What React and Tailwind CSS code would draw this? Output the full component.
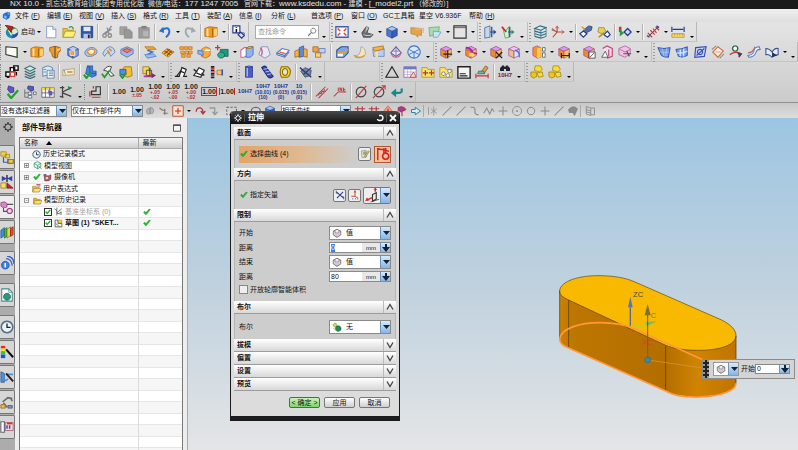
import { useState } from "react";

const cube = (top, left, right, line = "#555") => [
  ["M2 4.5L8 7V15L2 12z", left, line],
  ["M14 4.5L8 7V15L14 12z", right, line],
  ["M8 1.5L14 4.5L8 7L2 4.5z", top, line],
];
const orangeCube = cube("#d69be8", "#f28c1e", "#fbc84a", "#a04a9a");

// Each icon is a list of [path, fill, stroke, strokeWidth] on a 16x16 grid
const ICONS = {
  app: [["M2 6l5-3l6 2v7l-5 3l-6-3z", "#2a6fd6", "#174a9c"], ["M4 8l4 1v5l-4-2z", "#7fc0ff"], ["M9 2l5 1v5l-5-1z", "#38b0e8", "#174a9c"]],
  logo: [
    ["M8 2a7 6.500 0 1 0 .1 0z", "#2f9a4a"],
    ["M8 9L15 7A7 7 0 0 1 7 15z", "#2050b0"],
    ["M1 7a7 7 0 0 0 7 8l1-4z", "#1d86c8"],
    ["M7 6l5-2l3 4l-5 3z", "#e8e8d0"],
    ["M4 6l3 5l6-6", null, "#d8e4d0", 1.5],
    ["M0 0l9 2l-2 6z", "#c81e1e", "#701010"],
  ],
  file: [["M3 1.500H10L13.500 5V14.500H3z", "#fff", "#6a83c0"], ["M10 1.500V5H13.500", "#cfe0fa", "#6a83c0"]],
  open: [["M1 4h5l1 2h6v8H1z", "#e8c33c", "#a88a18"], ["M1 14l3-7h12l-3 7z", "#fdf07a", "#a88a18"], ["M8 3q4-3 5 2", null, "#3a9a3a", 1.5]],
  save: [["M1.500 1.500H14.500V14.500H1.500z", "#2f56a8", "#16306c"], ["M4 2h8v5H4z", "#dfeafa"], ["M4 10h8v5H4z", "#b9c6da"], ["M9 11h2v4H9z", "#223"]],
  cut: [["M12 1L6 10M7 3L9 10M4 9L12 5", null, "#8c8c8c", 1.5], ["M4 10a2 2 0 1 0 .1 0zM10 10a2 2 0 1 0 .1 0z", null, "#8c8c8c", 1.5]],
  copy: [["M1 2h8v9H1z", "#a3a3a3", "#8c8c8c"], ["M6 5h6l3 3v7H6z", "#979797", "#858585"]],
  paste: [["M2 3h12v12H2z", "#9c9c9c", "#8a8a8a"], ["M5 1h6v3H5z", "#828282"], ["M7 7h6v6H7z", "#b5b5b5"]],
  undo: [["M4 6Q12 1 13 7Q13 11 9 14", null, "#2d6fd0", 2.2], ["M1 7L6 2L7 9z", "#2d6fd0"]],
  redo: [["M12 6Q4 1 3 7Q3 11 7 14", null, "#a3abb0", 2.2], ["M15 7L10 2L9 9z", "#a3abb0"]],
  block: [["M1 4l5-2l9 1v9l-5 2l-9-1z", "#f39a1c", "#a55c0a"], ["M4 4v9", null, "#fff0c0", 2], ["M10 4v9", null, "#a55c0a", 1.5], ["M11 5l4-1v8l-4 1z", "#ffd070"]],
  info: [["M1 1h8v8H1z", "#fff", "#223a90", 1.3], ["M5 2.500v1M5 4.500v4", null, "#101040", 1.8], ["M7 11L10 8L14 12L11 15z", "#dfe6ff", "#223a90", 1.3], ["M9 9h5v4", null, "#223a90"]],
  lens: [["M10 2a4 4 0 1 0 .1 0z", null, "#777", 1.5], ["M7 9L2 14", null, "#777", 2]],
  fit: [["M1 2h14v12H1z", "#fff", "#3c5fb0", 1.5], ["M3 4l3 3M13 4l-3 3M3 12l3-3M13 12l-3-3", null, "#e03030", 1.6]],
  shade: [["M2 9l5-7l3 1l-2 6l7 2l-3 3H4z", "#6b7074", "#333"], ["M7 2l3 1l-4 6z", "#bbb"], ["M4 11q5 2 10 0", null, "#ccc", 1.2]],
  solid: cube("#a9c6f5", "#4a77cf", "#3560b6", "#2a4a90"),
  plane: [["M1 3l12 1v8l-4-1v3l-3-3l-5-1z", "#e5a54c", "#b98038"], ["M6 5l9-1v5", null, "#d8b890", 1.5]],
  section: [["M1 3l12-1l-1 7l-10 4z", "#a8dcae", "#5aa872"], ["M6 7l9 1l-4 6l-5 0z", "#c0e6f8", "#6a90c0"]],
  frame: [["M1 1h14v14H1z", "#e4e4e4", "#333", 1.3], ["M1 3h14", null, "#333"]],
  door: [["M2 3l6-2v13l-6 1z", "#c3d9ef", "#34588a"], ["M10 2v12M8 8h7", null, "#244c9a", 1.4], ["M12 5l3 3l-3 3z", "#244c9a"]],
  door2: [["M2 3l3 4l4-5v12l-4 1z", "#d8f0d8", "#2a9a40"], ["M1 2l5 6", null, "#d02828", 2], ["M10 2v12M8 8h7", null, "#244c9a", 1.4], ["M12 5l3 3l-3 3z", "#2a9a40"]],
  layers: [["M2 4l6-3l7 2l-6 3zM2 7l7 2l6-2M2 10l7 2l6-2M2 13l7 2l6-2", "#d6eaf4", "#336a80", 1.2], ["M2 4v9M15 3v10M9 6v9", null, "#336a80"]],
  csys: [["M2 14L7 8V2M7 8H15M7 8L1 5", null, "#c04830", 1.3], ["M5 4L7 1L9 4M12 6l3 2l-3 2", null, "#c04830"], ["M1 3l3 2l-3 2z", "#888"]],
  move: [["M1 10L5 7L9 10L5 14z", "#fff", "#223a90", 1.4], ["M5 6L11 1l4 1l-1 4l-6 3z", "#4c70b8", "#334"], ["M3 2l4 3", null, "#e09020", 1.6]],
  key: [["M2 3h6l2 4l-4 3l-5-2z", "#e7d057", "#948020"], ["M8 11L12 7L15 11L12 14z", "#fff", "#223a90", 1.4], ["M2 14l6-5", null, "#a89020", 1.8]],
  pick: [["M1 2h3v6H1z", "#e02c2c"], ["M2 5l5 4l-5 4z", "#2c9a40"], ["M7 8L11 4L15 8L11 12z", "#cfd8ff", "#223a90", 1.5]],
  measure: [["M2 14L14 2", null, "#444", 1.2], ["M2 9l5 5M5 6l5 5M8 4l4 5M11 2l4 4", null, "#c83434", 1.3], ["M1 12l3 2M12 1l3 2", null, "#3050a0", 1.4]],
  ruler: [["M1 10h14v4H1z", "#f6dc70", "#a48430"], ["M1 2v6M15 2v6M2 5h12", null, "#223a90", 1.3], ["M4 10v2M7 10v2M10 10v2M13 10v2", null, "#a48430"]],

  sketch: [["M1 2l13 1v11l-13-3z", "#f7fbf4", "#333", 1.2], ["M14 3v11", null, "#3b7a3b", 1.5]],
  revolve: [["M2 3q6-3 12 0v4q-3 1-3 7q-3 2-6-1q0-5-3-6z", "#f49d22", "#8a4a0a"], ["M8 1v14", null, "#555", 1.4], ["M10 6q3 0 4-2", null, "#ffe0a0", 1.6]],
  hollow: [...cube("#b4cdf7", "#5583da", "#7ca3ea", "#2a4a90"), ["M4 7l6-1v6l-5 0z", "#f0a040", "#fff"]],
  hole: [["M1 8q3-6 10-5q6 3 3 7q-4 4-10 3q-4-2-3-5z", "#a9c4f0", "#4a6cb0"], ["M4 7q4-4 8-1q1 4-4 5q-4-1-4-4z", "#fff3c8", "#e89020", 1.5]],
  rib: [["M1 10q3-8 9-8q4 1 5 6l-5 5q-1-5-4-4q-2 1-3 4z", "#c3dbf5", "#4a6cb0"], ["M6 6l3 4M8 4l3 3", null, "#e89020", 2]],
  pocket: [["M1 5l7-3l7 3v5l-7 4l-7-4z", "#9db9ee", "#4060a8"], ["M3 6l5 3l5-3l-5-2z", "#f07b50", "#b03030"]],
  thicken: [["M2 2h10l3 3H5z", "#f8a62c", "#b36a10"], ["M5 6l6 2l-6 3", null, "#456fc8", 1.6], ["M2 11l10-1l3 3l-10 2z", "#9fbcf2", "#456fc8"]],
  pattern: [["M1 9l6-5l8 4l-7 6z", "#f9b64a", "#a86010"], ["M4 7l7 4M7 5l6 4M4 10l6-5M7 12l5-5", null, "#8a4a10", 1.3]],
  grid: [["M1 2h4v3H1zM6 2h4v3H6zM11 2h4v3h-4zM2 7h4v3H2zM7 7h4v3H7zM11 7h4v3h-4zM3 11h4v3H3zM9 11h4v3H9z", "#fbb040", "#c06a10"]],
  unite: [["M5 5l5-3l5 2v8l-5 3l-5-2z", "#f8ad3c", "#ad650c"], ["M1 6l6 1v5l-6-2z", "#8fb2f0", "#3f63b0"], ["M9 6h6", null, "#fff", 1.6]],
  unite2: [["M6 5h9v8H6z", "#1d9a80", "#0c5a4c"], ["M7 8a4 3.500 0 1 0 .1 0z", "#2fae8c", "#0c5a4c"], ["M3 0v6M0 3h6", null, "#d03030", 1.4]],
  trim: [["M1 6l4-3h4v8l-4 3H1z", "#fff", "#d06090", 1.2], ["M7 4l3-2h5v9l-3 3H7z", "#8fb4f2", "#305aa8"], ["M7 4l3-2h5l-3 2z", "#f6c04a", "#a06a10"]],
  sheet: [["M4 2h7l3 9l-6 4l-7-4z", "#e7e9fa", "#6d78b8"], ["M3 3q3 4 1 9", null, "#e05050", 1.5]],
  slab: [["M1 9L7 4L15 6L10 12z", "#fff", "#5a74c0", 1.3], ["M1 9v2l9 3v-2M10 14l5-6", null, "#5a74c0", 1.2], ["M4 8l7 2", null, "#e07050", 1.5]],
  bend: [["M1 7l5-2v8l-5 1z", "#f9b33c", "#9d5c12"], ["M6 3l5-2v12l-5 1z", "#5a8ad8", "#2c4f98"], ["M11 4l4 1v9l-4-1z", "#f9b33c", "#9d5c12"]],
  bend2: [["M1 2h6v6H1z", "#f9a23c", "#a05c12"], ["M8 4h7v5H8z", "#bcd0f5", "#4f70b8"], ["M4 9h6v5H4z", "#fbd27a", "#a05c12"]],
  edge: [["M2 6l5-4h8v7l-5 5H2z", "#7ba4ee", "#2c4f98", 1.2], ["M3 9h7l5-4", null, "#e8a020", 1.8], ["M3 10h6v3H3z", "#fff"]],
  swoosh: [["M1 12q8 2 8-10q6 1 5 9q-3 6-13 1z", "#f9e3b0", "#8a9ad0"], ["M2 13q6 3 11-1", null, "#e09030", 1.5]],
  shell: [["M2 5l9-3l4 2v9H3z", "#b7cdf2", "#5c78b0"], ["M2 3l12-2v4l-10 2z", "#f7b24a", "#a06a10"], ["M5 8v6h3V7z", "#f6dfa0"]],
  draft: [["M8 2l6 7l-6 4L2 9z", "#ece2f4", "#5c5ca0", 1.2], ["M3 10a5 4 0 0 0 10 0", null, "#c86080", 1.4], ["M8 2v11M5 7h6", null, "#5c5ca0"]],
  wire: [["M8 1a7 7 0 1 0 .1 0z", "#d8e8fb", "#4878c8", 1.3], ["M2 5l6 3l6-3M8 8v7M2 11l6-3l6 3", null, "#4878c8", 1.1]],
  synMove: [...orangeCube, ["M10 6v9M5 10.500h10", null, "#222", 1.4]],
  synDel: [...orangeCube, ["M2 3q6 0 8 6l5 1", null, "#b02090", 2], ["M6 9h5v4H6z", "#f8e04a"]],
  synX: [...orangeCube, ["M8 8l7 7M15 8l-7 7", null, "#222", 1.6]],
  synRep: [...cube("#eac8f2", "#f4c07a", "#d8e4fa", "#a04a9a"), ["M9 6q6 1 5 8", null, "#6070c0", 1.6]],
  synOff: [["M1 3l5-2l4 2v11l-4 1l-5-3z", "#f59422", "#a04a9a"], ["M6 4l4-1v11l-4 1z", "#fbd050"], ["M12 3h3v4h-3zM12 9h3v5h-3z", "#fff", "#444"]],
  synDim: [...orangeCube, ["M5 9v6M14 9v6M5 12h9", null, "#222", 1.4]],
  synBox: [...orangeCube, ["M8 8h7v7H8z", "#fff", "#222"], ["M9 14l5-5", null, "#222"]],
  synPink: [["M3 4l5-3l6 3v9l-6 2", "#f8dcec", "#c04a7a", 1.4], ["M2 14l4-7l3 7z", "#fff", "#333"], ["M10 5v8", null, "#c04a7a", 1.4]],
  synPink2: [["M1 4l7-3l6 3v6l-6 4l-7-3z", "#f2c4e4", "#a04a9a"], ["M2 5l6 3l6-3", null, "#a04a9a"], ["M6 10h9M10 7l3 6", null, "#555", 1.4]],
  surf: [["M1 3q7 2 14 0l-2 11q-5 0-8-2z", "#6f9df0", "#2c52a8", 1.1], ["M6 4l2 9M11 4l-1 9M3 8q6 1 11 0", null, "#b8d0fa"]],
  surf2: [["M1 5q7 0 13-3v10q-6 3-10 1z", "#6f9df0", "#2c52a8", 1.1], ["M6 5v8M10 4v9M2 9q7 1 12-2", null, "#d8e6ff", 1.4]],
  surf3: [["M3 3l12-1l-2 11l-11 1z", "#c3d3fa", "#3a50b0", 1.3], ["M8 5a3 3 0 1 0 .1 0zM4 12l9-8", null, "#3a50b0", 1.3]],
  quad: [["M8 2l6 5l-6 7l-6-6z", "#fdf0e4", "#c87850", 1.4], ["M1 5l5-4M15 10l-5 5", null, "#888", 1.2], ["M5 8l6 0", null, "#c87850"]],
  gearSurf: [["M7 1a3 3 0 1 0 .1 0z", "#fff", "#2c6a3c", 1.6], ["M1 11q6-5 13-1l-3 4", null, "#b04848", 1.6], ["M9 8l6 2l-3 4z", "#3a3a66"]],
  curve: [["M1 12q7-1 7-6q1-4 6-4l1 3q-4 0-5 4q-2 5-8 5z", "#eef2fc", "#5c78c0", 1.2], ["M1 9q6 0 8-7", null, "#b07070", 1.3]],
  book: [["M1 4q4 0 7 4q3-5 7-4v7q-4 0-7 3q-3-4-7-3z", "#e6eefc", "#3a5090", 1.2], ["M8 8l6 4l-6 2z", "#23306a"]],

  nodes: [["M1 8h5v5H1zM6 3h5v5H6zM10 1h5v5h-5z", "#fff", "#111", 1.6], ["M6 8h5v5H6z", "#fff", "#d04040", 1.5], ["M2 14h3M13 8v4", null, "#111", 1.6]],
  stack: [["M2 4l6-3l6 3l-6 3z", "#cfeae6", "#3a6e74", 1.2], ["M2 7l6 3l6-3M2 10l6 3l6-3M2 13l6 2.500l6-2.500", null, "#3a6e74", 1.5]],
  sheets: [["M2 3l6-2l5 2v10l-5-2l-6 2z", "#dcecfa", "#3f6898"], ["M7 6h8v9H7z", "#eef4fb", "#3f6898"], ["M9 8h5M9 10h5M9 12h5M3 5h3M3 8h3", null, "#3f6898"]],
  note: [["M1 6l13-2v7l-13 1z", "#f8ecd0", "#b09058"], ["M6 7h6v2H6z", "#c89850"], ["M2 5l2 6", null, "#777"]],
  partA: [["M5 1h6v6h4v5l-5 2l-7-4z", "#3c84dc", "#1a4a98"], ["M5 1l3 2v6l7 1", null, "#1a4a98"], ["M1 11l3 4l5-7", null, "#239a2f", 2.2]],
  partB: [["M3 6q4-6 9-4l-2 5l5 5l-4 1l-4-6z", "#f0f4f4", "#444", 1.1], ["M1 10l3 4l6-8", null, "#239a2f", 2]],
  partC: [["M6 2h8l1 10l-5 2l-6-2V5z", "#f8c02c", "#946a08"], ["M1 5h7v6H1z", "#4f8de0", "#1a4a98"], ["M1 11l3 4l4-6", null, "#239a2f", 2]],
  kit: [["M1 2h7v8H1z", "#f6d84c", "#8a7010"], ["M5 6h6v6H5z", "#f6d84c", "#222"], ["M2 13l10 0", null, "#a43c9a", 2], ["M9 3v9", null, "#444", 1.4], ["M11 9l5 3l-5 3z", "#7a2a80"]],
  tag: [["M1 13h5L9 3l5 2l-3 8h4", "#fff", "#222", 1.3], ["M7 7l5 2M3 13L8 6", null, "#222", 1.3]],
  tag2: [["M2 12L8 3l6 3l-4 8z", "#fff", "#222", 1.3], ["M5 9l7 3M2 5l4 3M11 9l3 3", null, "#222", 1.5]],
  wave: [["M3 1v2M3 5v2M3 9v2M3 13v2", null, "#222", 4], ["M1 4h4M1 8h5M1 12h4", null, "#d03030", 1.4], ["M8 6h6v5H8z", "#f6c46a", "#a06a20"], ["M14 5v7", null, "#3a58b0", 1.8]],
  tube: [["M4 2h8v12H4z", "#4a5cc0", "#24307c"], ["M6 3v10", null, "#aab6f4", 1.6], ["M4 2q4-2 8 0q-4 2-8 0z", "#8c9cec", "#24307c"]],
  spring: [["M2 3q4-4 6 1l7 9q-4 4-7-1z", "#3c50b4", "#1c2a78", 1.3], ["M4 5l5-1M6 8l5-1M8 11l5-1", null, "#b8c2f8", 1.1]],
  ring: [["M4 2h7q4 3 3 7q-1 5-4 5H4q-3-6 0-12z", "#f8d430", "#8a6c08", 1.2], ["M8 4a3 4 0 1 0 .1 0z", "#e8e4d0", "#8a6c08", 1.2]],
  bolt: [["M2 7l5-4l7 3l-1 6l-6 2z", "#7484a8", "#2f3d68"], ["M1 3l13 11M14 3L5 11", null, "#2f3d68", 1.5]],
  tri: [["M8 2L15 14H1z", "none", "#222", 1.3]],
  cal: [["M1 2h14v12H1z", "#fff", "#7a50a0"], ["M1 2h14v3H1z", "#6c7ad0"], ["M1 8h14M1 11h14M5 5v9M9 5v9", null, "#b0a0d0"], ["M8 14l4-6l3 6z", "#f8d8d8", "#c03030"]],
  foldPlus: [["M1 3h6l1 2h7v9H1z", "#f8e468", "#a08a18"], ["M5 6v6M2 9h6M12 6v6M9 9h6", null, "#c03030", 1.4]],
  foldGear: [["M1 3h6l1 2h7v9H1z", "#f8e468", "#a08a18"], ["M5 8a2 2 0 1 0 .1 0zM12 5a2 2 0 1 0 .1 0zM10 10a2 2 0 1 0 .1 0z", "#fff", "#555"]],
  box: [["M1 2h14v13H1z", "#f4f4f4", "#222", 1.6], ["M3 10h7M3 12.500h9", null, "#222", 1.4]],
  brush: [["M7 8L12 1l3 2l-4 6z", "#d8a050", "#705020"], ["M4 7h6l1 3H3z", "#7ab0a0", "#356050"], ["M1 10v5M15 10v5M1 12.500h14", null, "#d03030", 1.3]],
  gold: [["M6 1h6l2 4l-3 3l-6-2z", "#f8dc3c", "#9a7c08"], ["M1 8h6l1 5l-4 2l-3-2z", "#f0c420", "#9a7c08"], ["M8 9l6-1l1 5l-5 1z", "#f8dc3c", "#9a7c08"]],

  plug: [["M4 1l6 2v5l-4 1l-3-4z", "#5c58c0", "#2a2880"], ["M3 10l4 5l8-9", null, "#22a52e", 2.6]],
  plugTree: [["M6 1l6 1v4l-3 1l-4-3z", "#5c58c0", "#2a2880"], ["M2 5v9h4M2 9h4", null, "#555"], ["M6 8h4v3H6zM6 12h4v3H6zM12 8h3v3h-3z", "#e8eefa", "#556"]],
  plugGrid: [["M1 3h14v11H1z", "#fff", "#444"], ["M1 3h14v3H1z", "#f0d850"], ["M1 9h14M5 3v11M10 3v11", null, "#444"], ["M8 6l5 1v5l-4 0z", "#5c58c0"]],
  axes: [["M4 1v13M4 8l10-5M4 9l10 4M1 3h5", null, "#444", 1.4], ["M10 1l5 2l-4 3z", "#2c8a50"], ["M1 13l4 1", null, "#444", 1.5]],
  profile: [["M3 11V7h5V2h5v9z", "none", "#333", 1.3], ["M3 14h10M1 7v6M5 4V1", null, "#c83434", 1.4]],
  stripes: [["M1 13L12 2M4 15L15 4", null, "#b84040", 1.2], ["M4 12l1-3l2 1l1-3l2 1l1-3", null, "#b84040", 1.2]],
  leader: [["M1 13L6 8H15", null, "#b84040", 1.2], ["M6 3v4M8 7V3l2 4V3M12 3v4h2M12 5h2", null, "#b84040", 1.1]],
  dia: [["M8 2.500a5.500 5.500 0 1 0 .1 0z", null, "#444", 1.3], ["M2 15L14 1", null, "#b84040", 1.3]],
  dia2: [["M8 2.500a5.500 5.500 0 1 0 .1 0z", null, "#444", 1.3], ["M1 15L15 1M11 1h4v4", null, "#b84040", 1.3]],
  back: [["M13 4q2 5-3 5H5", null, "#158a8a", 2.6], ["M7 4L1 9L7 14z", "#158a8a"]],

  rot: [["M3 9q0-5 5-5v8q-5 1-5-3zM8 3q5 0 5 5t-5 3z", "#b4b4b4", "#888"]],
  snapA: [["M2 4l4 3h4M9 5v8M7 11h6", null, "#8c7068", 1.5]],
  snapB: [["M1 1h14v14H1z", "#fbe2cc", "#b05838", 1.3], ["M8 4v8M4 8h8", null, "#c03030", 1.5]],
  hook: [["M3 9q0-6 6-5q3 1 3 6M9 8l3 4l3-4", null, "#a83848", 1.7]],
  elbow: [["M2 4h7v8M6 9l3 4l4-4", null, "#999", 1.8]],
  lasso: [["M1 3h13v10H1z", null, "#444", 1, "3 2"]],
  magnet: [["M3 12q-4-8 5-9q8 1 5 9", null, "#666", 1.5], ["M6 9h4v3H6z", "#aaa"]],
  hash: [["M5 2v12M11 2v12M1 5h14M1 11h4M11 11h4", null, "#b04040", 1.6]],
  person: [["M8 1l5 6v6H3V7z", "#f0a080", "#c05030"], ["M8 5v8", null, "#c03030", 1.6]],
  flag: [["M3 4q6-4 10 2l-6 3l-4-2zM8 7v8", "#8048b0", "#c03050", 1.5]],
  diamond: [["M7 3l7 5l-7 5v-3H2V6h5z", "#d0f0f4", "#2a8098", 1.3]],
  dotted: [["M2 3v10M5 5l8 6M5 11l8-6M9 2v12", null, "#9a9a9a", 1.3]],
  line: [["M2 14L14 2", null, "#8a8a8a", 1.4]],
  arcS: [["M2 3h3q3 0 3 4v3q0 3 5 3", null, "#8a8a8a", 1.5]],
  zig: [["M1 11l4-7l4 8l3-7l3 4", null, "#8a8a8a", 1.4]],
  plus: [["M8 2v12M2 8h12", null, "#8a8a8a", 1.4]],
  target: [["M8 2a6 6 0 1 0 .1 0z", null, "#8a8a8a", 1.2], ["M8 7a1 1 0 1 0 .1 0z", "#777"]],
  ringG: [["M8 3a5 5 0 1 0 .1 0z", null, "#8a8a8a", 1.3]],
  blob: [["M2 6q6-7 12-1l-4 9l-2-4l-5 0z", "#8a8a8a", "#777"]],
  page: [["M3 2l6 2v10l-6-2zM9 4h5v9H9M3 6l6 2M3 9l6 2", "none", "#8a8a8a", 1.2]],

  gear: [["M8 3a5 5 0 1 0 .1 0z", null, "#222", 1.6], ["M8 0v3M8 13v3M0 8h3M13 8h3M3 3l2 2M11 11l2 2M13 3l-2 2M5 11l-2 2", null, "#222", 1.6]],
  gearW: [["M8 3.500a4.500 4.500 0 1 0 .1 0z", null, "#fff", 2], ["M8 0v3M8 13v3M0 8h3M13 8h3M3 3l2 2M11 11l2 2M13 3l-2 2M5 11l-2 2", null, "#fff", 1.8]],
  asm: [["M1 2h6v5H1zM6 5h5v4H6z", "#f6d040", "#9a7c10"], ["M4 8v6h5M9 11h6v4H9z", "none", "#3c5aa8", 1.4], ["M10 11h5v4h-5z", "#f6d040", "#9a7c10"]],
  constraint: [["M2 1l6 3l6-3v6l-6-3l-6 3z", "#2c40c0"], ["M8 0v8", null, "#111", 1.4], ["M1 9h6v6H1z", "#f8e050", "#8a7010"], ["M8 9l7 6H8z", "#d02030", "#801020"]],
  tree: [["M1 3l4-1l3 2v4l-4 1l-3-2z", "#d888c0", "#8a3a80"], ["M8 5h7M4 9v4h4", null, "#555", 1.2], ["M11 9.500a3 3 0 1 0 .1 0z", "#f4d0e8", "#a03a80", 1.4]],
  books: [["M1 6l4-3v9l-4 3z", "#3c90e0", "#1a5090"], ["M5 5l3-2v10l-3 2z", "#40b850", "#1d7030"], ["M8 5l4-3v10l-4 3z", "#f0d040", "#907010"], ["M12 4l3-2v9l-3 2z", "#e05030", "#902010"]],
  radio: [["M6 6a4.500 4.500 0 1 0 .1 0z", "#3f7fe0", "#1c4aa0"], ["M6 8v5", null, "#fff", 1.8], ["M7 3q6 0 7 8M8 0q8 1 8 9", null, "#2d62c8", 1.5]],
  web: [["M2 1h8l4 4v10H2z", "#fff", "#4a8a8a", 1.2], ["M8 6a4 4 0 1 0 .1 0z", "#2c9a6a", "#1a5a80"], ["M10 1v4h4", null, "#4a8a8a"]],
  clock: [["M8 1.500a6.500 6.500 0 1 0 .1 0z", "#eaf2fa", "#56708c", 1.8], ["M8 4v4.500h4", null, "#222", 1.5]],
  spectrum: [["M1 1h5v3H1z", "#e03020"], ["M1 4h5v3H1z", "#f8e020"], ["M1 7h5v4H1z", "#30c840"], ["M1 11h5v4H1z", "#2050e0"], ["M7 5l8 9", null, "#111", 2.4]],
  wand: [["M1 2l4 2v10H1z", "#5090d8", "#2a5090"], ["M4 7q2 8 5 3M9 5h6", null, "#5090d8", 1.8], ["M7 4l8 9", null, "#222", 2.2]],
  robot: [["M3 8l6-5l5 1M4 9l4 5M12 3l2 4", null, "#666", 1.8], ["M1 11h5v4H1z", "#f0b848", "#806020"], ["M9 12h5v3H9z", "#8a96b8", "#445"]],
  doc: [["M1 2h4v12H1z", "#fff", "#667", 1.3], ["M6 3h9v9H6z", "#f4d8d8", "#a04050"], ["M8 6v4M11 6v4", null, "#2c4cb0", 1.6], ["M8 4h6", null, "#d03030", 2]],

  view: [["M2 4l6-3l6 3v6l-6 4l-6-4z", "#dff4ea", "#2f9a70", 1.4], ["M2 4l6 4l6-4M8 8v6", null, "#2f9a70", 1.3], ["M10 9l5 5", null, "#d04040", 1.6]],
  camera: [["M2 5h8l4-2v8l-4 3H3z", "#b85868", "#6a2030"], ["M7 6a3 3 0 1 0 .1 0z", "#dcd0e0", "#553"], ["M1 2h5v3H1z", "#704a90"]],
  exprs: [["M1 4h5l1 2h6v8H1z", "#e8b83c", "#8a6a18"], ["M1 14l3-6h12l-3 6z", "#fbe27a", "#8a6a18"], ["M8 1h7M8 3.500h7", null, "#a03030", 1.4]],
  folder: [["M1 4h5l1 2h6v8H1z", "#e2b030", "#8a6a18"], ["M1 14l3-6h12l-3 6z", "#fbdf62", "#8a6a18"]],
  datum: [["M5 1v14M5 10l9-7M5 11l9 2M1 3l4 4", null, "#555", 1.4], ["M9 9l5-1l-1 4z", "#3c9a58"]],
  sketchT: [["M2 14V2h5v6h7v6z", "none", "#333", 1.2], ["M8 2h6v5H8z", "#f6d850", "#8a7010"], ["M3 8l7 6", null, "#2c8a40", 1.5]],
  tick: [["M1 9l5 5l9-11l-3-1l-6 7l-3-3z", "#27b534", "#128a20", 0.6]],
  win: [["M1 1.500h14v13H1z", "#f4f4f4", "#333", 1.6], ["M1 3h14", null, "#333", 1.6]],
  sketchBtn: [["M2 3l8-1v11l-7 1z", "#d6ddd0", "#777"], ["M5 4h5v5H5z", "#8cae80"], ["M7 12l6-9l2 1l-6 9z", "#e8c860", "#706020"]],
  curveBtn: [["M2 1v14M1 2q8 1 14 3M9 1v6", null, "#c82828", 1.6], ["M11 7a3.500 3.500 0 1 0 .1 0zM11 1v6", null, "#c82828", 1.9]],
  reverse: [["M2 3l12 10M13 3L3 13", null, "#2c3f94", 1.7], ["M2 1v4h3M14 15v-4h-3", null, "#2c3f94", 1.2]],
  vecDlg: [["M8 1v9H2M8 10l5 3", null, "#c85030", 1.5], ["M6 4l2-4l2 4z", "#c85030"], ["M4 14h1M8 14h1M12 14h1", null, "#223a90", 2]],
  vector: [["M8 14V7l4-2v7z", "#eee", "#333", 1.2], ["M8 10L2 13M11 4V0", null, "#d03030", 1.6], ["M0 14l2-4l3 3z", "#d03030"], ["M9 2l2-2l2 2z", "#d03030"], ["M6 15l9-3", null, "#333"]],
  value: [["M2 5l6-3l6 3v6l-6 4l-6-4z", "#f0ecec", "#5a5058", 1.2], ["M2 5l6 3l6-3M8 8v7M5 4v8M11 4v8", null, "#7a6a74"]],
  none: [["M5 2a3 3 0 1 0 .1 0z", "#c8e060", "#5a7a18"], ["M10 6a4.500 4.500 0 1 0 .1 0z", "#1f8a58", "#0c5030"], ["M2 10l5 4", null, "#e0b030", 1.6]],
};

function Icon({ name, className = "size-3.5" }) {
  return (
    <svg className={`${className} shrink-0`} viewBox="0 0 16 16" aria-hidden="true">
      {ICONS[name].map(([d, fill, stroke, width, dash], i) => (
        <path key={i} d={d} fill={fill || "none"} stroke={stroke || "none"} strokeWidth={width || 0.8} strokeDasharray={dash} />
      ))}
    </svg>
  );
}

// Toolbar tokens: "g" and ":" grips, "|" and "||" separators, "v" drop-down, "." overflow
const ROW_1A = "g logo START v file open save | cut copy paste | undo v redo | block v | info".split(" ");
const ROW_1B = ". : fit v shade v solid v plane section v frame v : door door2 . : layers csys v | move key | pick v | measure v ruler .".split(" ");
const ROW_2 = "g sketch v block revolve hollow hole rib pocket || thicken pattern grid unite unite2 v trim sheet slab bend bend2 || edge swoosh shell draft wire . : synMove v synDel v synX synRep v synOff v synDim v synBox synPink synPink2 v . : surf surf2 surf3 quad gearSurf curve book v .".split(" ");
const ROW_3A = "g nodes stack sheets | note | partA partB partC || kit . : tag tag2 wave . : tube spring ring | bolt .".split(" ");
const ROW_3B = ": tri cal foldPlus foldGear box brush || H7 . : gold gold .".split(" ");
const ROW_4 = "g plug plugTree plugGrid axes . g profile || T0 T1 T2 T3 T4 T5 T6 T7 T8 T9 T10 || stripes leader | dia dia2 back .".split(" ");

const TOLERANCES = {
  T0: { text: "1.00" },
  T1: { text: "1.00", sub: ["±.05"] },
  T2: { text: "1.00", sub: ["+.05", "-.02"] },
  T3: { text: "1.00", sub: ["+.05", "-.00"] },
  T4: { text: "1.00", sub: ["+.00", "-.02"] },
  T5: { text: "1.00", box: "border border-[#b03030]" },
  T6: { text: "1.00", box: "border-x border-[#b03030]" },
  T7: { text: "10H7", blue: true },
  T8: { text: "10H7", sub: ["(10.01)", "(10)"], blue: true },
  T9: { text: "10H7", sub: ["(0.015)", "(0)"], blue: true },
  T10: { text: "10", sub: ["(0.015)", "(0)"], blue: true },
};

function Tolerance({ text, sub = [], box = "", blue }) {
  return (
    <button className={`flex w-[18px] flex-col items-center font-bold ${blue ? "text-[#30308c]" : "text-[#222]"}`}>
      <span className={`leading-[7px] ${blue ? "text-[6px]" : "text-[7px]"} ${box}`}>{text}</span>
      {sub.map((s) => (
        <span key={s} className={`text-[5px] leading-[5px] ${blue ? "text-[#30308c]" : "text-[#b03030]"}`}>{s}</span>
      ))}
    </button>
  );
}

function Caret({ className = "" }) {
  return <i className={`size-0 border-x-2 border-t-2 border-x-transparent border-t-black ${className}`} />;
}

function Tool({ token }) {
  if (token === "g") return <i className="h-4 w-[3px] border-l border-dotted border-[#888]" />;
  if (token === ":") return <i className="ml-px h-5 w-1 border-l border-[#c0c0c0] bg-[radial-gradient(#999_1px,transparent_1px)] bg-size-[4px_3px]" />;
  if (token === "|") return <i className="ml-px h-4 w-0.5 border-l border-[#b4b4b4] bg-[#f4f4f4]" />;
  if (token === "||") return <i className="mr-px ml-0.5 h-4 w-0.5 border-l border-[#b4b4b4] bg-[#f4f4f4]" />;
  if (token === "v") return <button aria-label="下拉" className="flex h-4 w-[7px] items-center justify-center"><Caret /></button>;
  if (token === ".") return <button aria-label="更多" className="flex h-4 w-[9px] items-end justify-center pb-0.5"><Caret /></button>;
  if (token === "START") return <button className="w-3.5 whitespace-nowrap">启动</button>;
  if (token === "H7") {
    return (
      <button className="flex w-[18px] flex-col items-center">
        <svg className="h-2 w-3" viewBox="0 0 12 8" aria-hidden="true"><path d="M1 4l3-3l2 2l2-2l3 3v3H7V5H5v2H1z" fill="#223" /></svg>
        <span className="text-[6px] leading-[7px] font-bold text-[#7a2020]">10H7</span>
      </button>
    );
  }
  if (TOLERANCES[token]) return <Tolerance {...TOLERANCES[token]} />;
  return (
    <button aria-label={token} className="flex w-[18px] justify-center hover:bg-white/60">
      <Icon name={token} />
    </button>
  );
}

function Toolbar({ tokens }) {
  return (
    <div className="flex h-5 shrink-0 items-center border-r border-b border-r-[#b8b8b8] border-b-[#c4c4c4] *:shrink-0">
      {tokens.map((token, i) => <Tool key={i} token={token} />)}
    </div>
  );
}

const MENUS = [
  ["文件", "F", "w-8"], ["编辑", "E", "w-8"], ["视图", "V", "w-8"], ["插入", "S", "w-8"],
  ["格式", "R", "w-8"], ["工具", "T", "w-8"], ["装配", "A", "w-8"], ["信息", "I", "w-8"],
  ["分析", "L", "w-10"], ["首选项", "P", "w-10"], ["窗口", "O", "w-8"], ["GC工具箱", "", "w-9"],
  ["星空 V6.936F", "", "w-[50px]"], ["帮助", "H", "w-8"],
];

function BlueArrow({ full }) {
  return (
    <span className="pointer-events-none flex w-2.5 shrink-0 items-center justify-center self-stretch border-l border-[#6d93bb] bg-linear-to-b from-[#d8ebfc] to-[#86b4e2]">
      <svg className="size-2" viewBox="0 0 8 8" aria-hidden="true"><path d={full ? "M3 0h2v3h3L4 8L0 3h3z" : "M1 2h7L4.500 6z"} fill="#10223c" /></svg>
    </span>
  );
}

function Picker({ label, icon, options, className = "h-3.5 w-[62px]" }) {
  return (
    <span className={`flex shrink-0 items-center border border-[#8a8a8a] bg-white ${className}`}>
      {icon && <Icon name={icon} className="mr-1 ml-0.5 size-2.5" />}
      <select aria-label={label} className="w-0 flex-1 appearance-none bg-transparent outline-none">
        {options.map((option) => <option key={option}>{option}</option>)}
      </select>
      <BlueArrow />
    </span>
  );
}

function SelectionIcons({ names }) {
  return names.map((name, i) =>
    name === "v" ? <Caret key={i} className="mx-0.5 self-center" /> : (
      <button key={i} aria-label={name} className="flex w-3.5 justify-center"><Icon name={name} className="size-3" /></button>
    )
  );
}

function SelectionBar() {
  return (
    <div className="flex h-4 shrink-0 items-center border-t border-[#8f8f8f] bg-linear-to-b from-[#c8c8c8] to-[#dedede] *:shrink-0">
      <Picker label="类型过滤器" options={["没有选择过滤器"]} className="h-3 w-[67px]" />
      <Picker label="选择范围" options={["仅在工作部件内"]} className="ml-1 h-3 w-[72px]" />
      <SelectionIcons names={["rot", "snapA", "snapB", "v", "hook", "elbow"]} />
      <div className="ml-1 flex items-center"><SelectionIcons names={["lasso", "v"]} /></div>
      <div className="ml-0.5 flex"><SelectionIcons names={["magnet", "solid"]} /></div>
      <Picker label="曲线规则" options={["相连曲线"]} className="ml-1 h-3 w-[70px]" />
      <div className="ml-0.5 flex"><SelectionIcons names={["hash", "hash", "person", "flag", "diamond"]} /></div>
      <i className="mr-0.5 h-3 w-px bg-[#aaa]" />
      <SelectionIcons names={["dotted", "line", "line", "arcS", "zig", "plus", "target", "ringG", "plus", "line", "blob"]} />
      <i className="mr-0.5 h-3 w-px bg-[#aaa]" />
      <SelectionIcons names={["page"]} />
    </div>
  );
}

const TABS = [
  ["asm", ""], ["constraint", ""], ["tree", "bg-[#ececec]"], ["books", ""],
  ["radio", "mt-1.5"], ["web", "mt-[7px]"], ["clock", "mt-[7px]"],
  ["spectrum", ""], ["wand", ""], ["robot", ""], ["doc", ""],
];

function ResourceBar() {
  return (
    <nav className="flex w-[15px] shrink-0 flex-col bg-[#acacac]">
      <button aria-label="选项" className="flex h-[27px] items-start justify-center pt-1"><Icon name="gear" className="size-2.5" /></button>
      {TABS.map(([name, extra]) => (
        <button key={name} aria-label={name} className={`mb-px flex h-6 shrink-0 items-center rounded-r-xs border-y border-r border-[#777] bg-[#d6d6d6] ${extra}`}>
          <Icon name={name} />
        </button>
      ))}
    </nav>
  );
}

const NODES = [
  { icon: "clock", text: "历史记录模式", pad: "pl-3" },
  { icon: "view", text: "模型视图", pad: "pl-1", expand: "+" },
  { icon: "camera", text: "摄像机", pad: "pl-1", expand: "+", ticked: true },
  { icon: "exprs", text: "用户表达式", pad: "pl-3" },
  { icon: "folder", text: "模型历史记录", pad: "pl-1", expand: "-" },
  { icon: "datum", text: "基准坐标系 (0)", pad: "pl-6", box: true, style: "text-[#a0a0a0]" },
  { icon: "sketchT", text: "草图 (1) \"SKET...", pad: "pl-6", box: true, style: "font-bold" },
];
const EMPTY_ROWS = 20;

function Check() {
  const [on, setOn] = useState(true);
  return (
    <span className="grid place-items-center *:col-start-1 *:row-start-1">
      <input
        type="checkbox"
        aria-label="显示"
        checked={on}
        onChange={() => setOn(!on)}
        className="size-2 appearance-none border border-[#333] bg-white"
      />
      {on && <Icon name="tick" className="pointer-events-none size-1.5" />}
    </span>
  );
}

const ROW = "h-3 border-b border-[#e6e6e6] even:h-[11px] odd:bg-[#f6f6f6]";

function PartNavigator() {
  return (
    <aside className="flex w-[173px] shrink-0 flex-col border-r border-[#aaa] bg-[#ededed] px-1">
      <header className="flex h-[19px] shrink-0 items-center justify-between px-0.5 pl-[3px]">
        <h2 className="text-[8px] leading-[10px] font-bold">部件导航器</h2>
        <button aria-label="固定"><Icon name="win" className="size-2" /></button>
      </header>
      <div className="min-h-0 flex-1 overflow-hidden border border-b-0 border-[#777] bg-white">
        <table className="w-full table-fixed border-collapse text-left leading-[8px]">
          <thead>
            <tr className="h-2.5 bg-linear-to-b from-[#f4f4f4] to-[#cfcfcf]">
              <th className="w-[118px] border-r border-b border-[#aaa] py-0 pl-1 font-normal">
                <span className="flex items-center gap-2">名称 <i className="size-0 border-x-3 border-b-4 border-x-transparent border-b-black" /></span>
              </th>
              <th className="border-b border-[#aaa] py-0 pl-1 font-normal">最新</th>
            </tr>
          </thead>
          <tbody>
            {NODES.map((node) => (
              <tr key={node.text} className={ROW}>
                <td className={`border-r border-[#dcdcdc] py-0 pr-0 ${node.pad}`}>
                  <span className={`flex items-center gap-0.5 whitespace-nowrap ${node.style || ""}`}>
                    {node.expand && (
                      <button aria-label="展开" className="mr-0.5 flex size-[5px] items-center justify-center border border-[#999] text-[5px] leading-none">{node.expand}</button>
                    )}
                    {node.ticked && <Icon name="tick" className="size-2" />}
                    {node.box && <Check />}
                    <Icon name={node.icon} className="size-[9px]" />
                    {node.text}
                  </span>
                </td>
                <td className="py-0 pl-1">{node.box && <Icon name="tick" className="size-2" />}</td>
              </tr>
            ))}
            {Array.from({ length: EMPTY_ROWS }, (_, i) => (
              <tr key={i} className={ROW}>
                <td className="border-r border-[#dcdcdc] p-0" />
                <td className="p-0" />
              </tr>
            ))}
          </tbody>
        </table>
      </div>
    </aside>
  );
}

function Model() {
  return (
    <svg className="absolute top-[142px] left-[352px] h-[150px] w-[258px]" viewBox="0 0 774 450" role="img" aria-label="拉伸预览">
      <defs>
        <linearGradient id="side" x1="0" x2="1">
          <stop offset="0" stopColor="#c98200" />
          <stop offset=".08" stopColor="#bd7600" />
          <stop offset=".6" stopColor="#b46e00" />
          <stop offset=".78" stopColor="#d08400" />
          <stop offset="1" stopColor="#c07400" />
        </linearGradient>
      </defs>
      <path d="M59 92V238C60 250 70 258 86 264L377 393C400 407 440 412 480 411C550 408 588 390 588 370V228z" fill="url(#side)" />
      <path d="M59 92C62 62 120 46 180 47C225 48 255 53 285 66L545 180C575 195 589 212 588 228C586 255 540 272 470 271C440 271 400 266 377 256L86 120C68 112 58 104 59 92z" fill="#f8b900" stroke="#5a4210" strokeWidth="2" />
      <path d="M59 92V238M86 120V262M377 256V393M588 228V370" fill="none" stroke="#4c3206" strokeWidth="2" />
      <path d="M59 238C62 205 120 188 180 188C230 188 260 196 285 207L490 300M59 238C60 250 70 258 86 264L377 393C400 407 440 412 480 411C550 408 588 390 588 370" fill="none" stroke="#ff983a" strokeWidth="5" />
      <path d="M271 197V130" stroke="#5d6c88" strokeWidth="4" />
      <path d="M264 142L271 110L278 142z" fill="#5d74b4" />
      <path d="M280 202L322 194" stroke="#b9cf40" strokeWidth="4" />
      <path d="M316 186L350 184L322 198z" fill="#7cb860" />
      <path d="M323 300V160" stroke="#70623c" strokeWidth="3" />
      <path d="M314 166L323 132L332 166z" fill="#7d7038" />
      <path d="M323 300L490 324" stroke="#d69a48" strokeWidth="2" />
      <circle cx="323" cy="300" r="9" fill="#2b8bb0" stroke="#1b5c78" />
      <g fontFamily="Liberation Sans, sans-serif" fontSize="23">
        <text x="279" y="111" fill="#4a4a58">ZC</text>
        <text x="332" y="175" fill="#8a7a20">C</text>
        <text x="307" y="255" fill="#d04a20">XC</text>
      </g>
    </svg>
  );
}

function StartHandle() {
  return (
    <div className="absolute top-[241px] left-[514px] flex h-5 w-[93px] items-center border border-[#8c8c8c] bg-[#d4d4d4]">
      <span className="h-full w-1.5 border-x-2 border-dotted border-[#999] bg-[#222]" />
      <span className="ml-1 flex h-3.5 w-[26px] items-center border border-[#999] bg-white">
        <Icon name="value" className="mx-0.5 size-2.5" />
        <button aria-label="限制类型" className="flex flex-1 self-stretch"><BlueArrow /></button>
      </span>
      <label className="ml-0.5 flex items-center whitespace-nowrap">
        开始
        <span className="flex h-2.5 w-[35px] items-center border border-[#888] bg-white">
          <input className="w-0 flex-1 pl-px outline-none" defaultValue="0" />
          <BlueArrow full />
        </span>
      </label>
    </div>
  );
}

function Section({ title, open, className = "", children }) {
  return (
    <section>
      <h3 className="flex h-[13px] items-center justify-between border-b border-[#9c9c9c] bg-linear-to-b from-white to-[#d8d8d8] pl-[3px] font-bold">
        {title}
        <button aria-label={title} className="flex h-full w-[13px] items-center justify-center border-l border-[#bbb]">
          <svg className="size-2" viewBox="0 0 8 8" aria-hidden="true">
            <path d={open ? "M1 6.500L4 1.500L7 6.500" : "M1 1.500L4 6.500L7 1.500"} fill="none" stroke="#444" strokeWidth="1.300" />
          </svg>
        </button>
      </h3>
      {open && <div className={`border-x border-[#b4b4b4] bg-[#cdcdcd] px-1 ${className}`}>{children}</div>}
    </section>
  );
}

function Distance({ id, value, selected }) {
  return (
    <div className="flex h-[11px] items-center justify-between">
      <label htmlFor={id}>距离</label>
      <span className="flex h-[11px] w-[62px] items-center border border-[#8a8a8a] bg-white pl-px">
        <input id={id} defaultValue={value} className={`outline-none ${selected ? "w-1 bg-[#2f86e0] text-white" : "w-4"}`} />
        <span className="ml-auto flex h-full w-[18px] items-center justify-center bg-[#e8e8e8] text-[6px]">mm</span>
        <BlueArrow full />
      </span>
    </div>
  );
}

const SMALL_BUTTON = "flex items-center justify-center border border-[#777] bg-[#eeeeee] rounded-xs";
const DIALOG_BUTTON = "h-[11px] w-[31px] rounded-xs border leading-[8px] whitespace-nowrap";

function ExtrudeDialog() {
  return (
    <div role="dialog" aria-label="拉伸" className="absolute top-[111px] left-[230px] w-[170px] rounded-t-sm border-x border-b-5 border-[#1c1c1c] bg-[#dcdcdc]">
      <header className="flex h-[13px] items-center rounded-t-sm bg-linear-to-b from-[#4a4a4a] to-[#111] pr-px text-white">
        <span className="flex w-3.5 justify-center border-r border-[#555]"><Icon name="gearW" className="size-2" /></span>
        <h2 className="ml-[3px] flex-1 text-[8px] font-bold">拉伸</h2>
        <button aria-label="重置" className="w-3">
          <svg className="mx-auto size-2" viewBox="0 0 8 8" aria-hidden="true"><path d="M3 1.500H5.500Q7 2 7 4Q6.500 7 3 6.500Q1.500 6 1.500 5" fill="none" stroke="white" strokeWidth="1.500" /></svg>
        </button>
        <button aria-label="关闭" className="w-3 border-l border-[#555]">
          <svg className="mx-auto size-2" viewBox="0 0 8 8" aria-hidden="true"><path d="M1 1L7 7M7 1L1 7" stroke="white" strokeWidth="1.800" /></svg>
        </button>
      </header>
      <div className="px-[3px] pt-[3px] pb-2">
        <Section title="截面" open className="flex h-7 items-center">
          <span className="flex h-[17px] flex-1 items-center gap-0.5 bg-linear-to-r from-[#e2a468] via-[#dfb88f] to-[#cdcdcd] pl-px">
            <Icon name="tick" className="size-2" />选择曲线 (4)
          </span>
          <button aria-label="绘制截面" className={`${SMALL_BUTTON} h-3.5 w-[13px]`}><Icon name="sketchBtn" className="size-2.5" /></button>
          <button aria-label="曲线" className="ml-[3px] flex h-[17px] w-[17px] items-center justify-center border border-[#b05a30] bg-[#f8c09c]"><Icon name="curveBtn" /></button>
        </Section>
        <Section title="方向" open className="flex h-7 items-center gap-0.5">
          <span className="flex flex-1 items-center gap-0.5 pl-px"><Icon name="tick" className="size-2" />指定矢量</span>
          <button aria-label="反向" className={`${SMALL_BUTTON} h-[13px] w-[13px]`}><Icon name="reverse" className="size-2.5" /></button>
          <button aria-label="矢量对话框" className={`${SMALL_BUTTON} h-[13px] w-[13px]`}><Icon name="vecDlg" className="size-2.5" /></button>
          <button aria-label="矢量类型" className={`${SMALL_BUTTON} h-[17px] w-7 justify-between`}><Icon name="vector" className="ml-px size-[15px]" /><BlueArrow /></button>
        </Section>
        <Section title="限制" open className="flex h-[79px] flex-col gap-0.5 pt-1">
          <div className="flex h-3.5 items-center justify-between">开始<Picker label="开始" icon="value" options={["值"]} /></div>
          <Distance id="from" value="0" selected />
          <div className="flex h-3.5 items-center justify-between">结束<Picker label="结束" icon="value" options={["值"]} /></div>
          <Distance id="to" value="80" />
          <label className="mt-px flex items-center gap-0.5">
            <input type="checkbox" className="size-[9px] appearance-none border border-[#888] bg-[#eee] checked:bg-[#3fae4c]" />
            开放轮廓智能体积
          </label>
        </Section>
        <Section title="布尔" open className="flex h-[25px] items-center justify-between">
          布尔<Picker label="布尔" icon="none" options={["无"]} />
        </Section>
        <Section title="拔模" />
        <Section title="偏置" />
        <Section title="设置" />
        <Section title="预览" />
        <footer className="mt-1.5 flex justify-end gap-1 pr-1.5">
          <button className={`${DIALOG_BUTTON} border-[#3c7a34] bg-linear-to-b from-[#c9f2bb] to-[#7ed468]`}>&lt; 确定 &gt;</button>
          <button className={`${DIALOG_BUTTON} border-[#777] bg-linear-to-b from-white to-[#cfcfcf]`}>应用</button>
          <button className={`${DIALOG_BUTTON} border-[#777] bg-linear-to-b from-white to-[#cfcfcf]`}>取消</button>
        </footer>
      </div>
    </div>
  );
}

export default function App() {
  return (
    <div className="relative flex h-screen flex-col overflow-hidden bg-[#d9d9d9] font-['Liberation_Sans','Noto_Sans_CJK_SC',sans-serif] text-[7px] leading-[8px] text-[#111]">
      <header className="flex h-[9px] shrink-0 bg-[#1a1a1a] pl-2.5 leading-[8px] whitespace-pre text-[#e4e4e4]">
        <h1><span className="text-[8px]">NX 10.0 - </span>凯忘达教育培训集团专用优化版  微信/电话：<span className="text-[8px]">177 1247 7005</span>   官网下载：<span className="text-[8px]">www.ksdedu.com - </span>建模 - <span className="text-[8px]">[_model2.prt</span> （修改的）]</h1>
      </header>

      <nav className="flex h-[13px] shrink-0 items-center bg-linear-to-b from-[#f0f0f0] to-[#dedede] whitespace-nowrap *:shrink-0">
        <span className="w-[15px] pl-0.5"><Icon name="app" className="size-[9px]" /></span>
        {MENUS.map(([text, key, width]) => (
          <button key={text} className={`text-left ${width}`}>
            {text}{key && <> (<u>{key}</u>)</>}
          </button>
        ))}
      </nav>

      <div className="shrink-0 bg-linear-to-b from-[#e4e4e4] to-[#cbcbcb]">
        <div className="flex h-5">
          <Toolbar tokens={ROW_1A} />
          <label className="my-[3px] ml-1.5 flex w-16 shrink-0 items-center border border-[#aaa] bg-white pr-px">
            <input aria-label="查找命令" placeholder="查找命令" className="w-0 flex-1 pl-0.5 outline-none placeholder:text-[#999]" />
            <Icon name="lens" className="size-2.5" />
          </label>
          <Toolbar tokens={ROW_1B} />
        </div>
        <div className="flex h-5"><Toolbar tokens={ROW_2} /></div>
        <div className="flex h-5">
          <Toolbar tokens={ROW_3A} />
          <div className="w-[53px] border-b border-[#c4c4c4]" />
          <Toolbar tokens={ROW_3B} />
        </div>
        <div className="flex h-5"><Toolbar tokens={ROW_4} /></div>
      </div>
      <SelectionBar />

      <main className="flex min-h-0 flex-1">
        <ResourceBar />
        <PartNavigator />
        <div className="relative min-w-0 flex-1 overflow-hidden bg-linear-to-b from-[#9cc5e2] via-[#bfd1de] to-[#e4e5e6]">
          <Model />
          <StartHandle />
        </div>
      </main>
      <ExtrudeDialog />
    </div>
  );
}
